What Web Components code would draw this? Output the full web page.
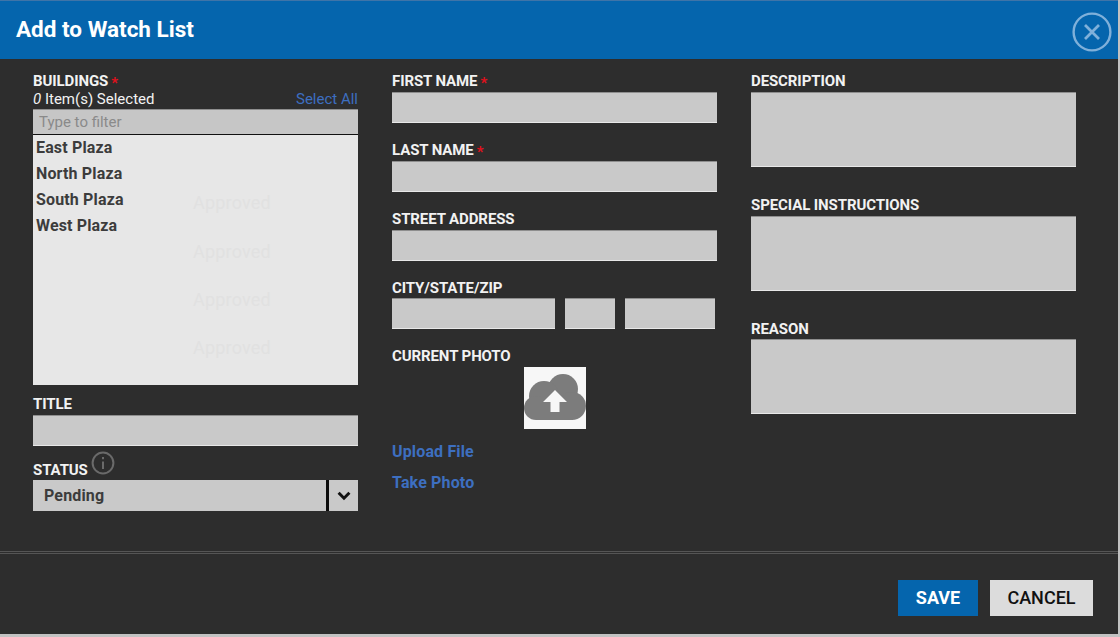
<!DOCTYPE html>
<html><head><meta charset="utf-8">
<style>
html,body{margin:0;padding:0;background:#c2c2c2;overflow:hidden}
body{font-family:Roboto,"Liberation Sans",sans-serif;height:637px}
</style></head><body>
<template id="t-field"><style>
:host{display:block;color:#f2f2f2}
.lab{display:flex;align-items:flex-start;height:var(--lh,20px);font:700 15px/18px Roboto,sans-serif;letter-spacing:-.1px}
.req{color:#e0101c;margin-left:3px;line-height:22px;display:none;letter-spacing:0}
:host([required]) .req{display:block}
</style><div class="lab"><span id="l"></span><span class="req">*</span><slot name="extra"></slot></div><slot></slot></template>

<template id="t-input"><style>
:host{display:block;box-sizing:border-box;height:var(--h,31px);width:var(--w,100%);background:#c9c9c9;border-top:1px solid #8e8e8e;border-bottom:1px solid #e8e8e8}
</style></template>

<template id="t-modal"><style>
:host{display:flex;flex-direction:column;width:1118px;height:634px;background:#2d2d2d;border-top:1px solid #3f74a8;box-sizing:border-box;position:relative}
header{flex:none;height:58px;background:#0565ad;display:flex;align-items:center;justify-content:space-between;padding:0 6px 0 16px;color:#fff;font:700 22.5px/1 Roboto,sans-serif}
header span{margin-top:-2px}
svg{display:block}
header svg{margin-top:3px}
main{flex:1;display:grid;grid-template-columns:325px 325px 325px;column-gap:34px;padding:13px 0 0 33px;min-height:0}
.col{display:flex;flex-direction:column;min-width:0}
.rule{flex:none;height:3px;border-top:1px solid #555;border-bottom:1px solid #555;box-sizing:border-box}
footer{flex:none;height:80px;display:flex;justify-content:flex-end;align-items:flex-start;gap:12px;padding:26px 25px 0 0;box-sizing:border-box}
</style>
<header><span><slot name="title"></slot></span>
<svg width="40" height="40" viewBox="0 0 40 40" fill="none" stroke="#7fb0da" stroke-width="2.4"><circle cx="20" cy="20" r="18.4"/><path d="M13 13l14 14M27 13L13 27" stroke-width="2.8"/></svg>
</header>
<main><div class="col"><slot name="a"></slot></div><div class="col"><slot name="b"></slot></div><div class="col"><slot name="c"></slot></div></main>
<div class="rule"></div>
<footer><slot name="actions"></slot></footer>
</template>

<template id="t-buildings"><style>
:host{display:block;color:#f2f2f2}
.lab{font:700 15px/18px Roboto,sans-serif;letter-spacing:-.1px;height:18px;display:flex}
.req{color:#e0101c;margin-left:3px;line-height:22px;letter-spacing:0}
.meta{display:flex;justify-content:space-between;font:400 15px/18px Roboto,sans-serif;height:19px}
.meta a{color:#3d6fc0}
.filter{box-sizing:border-box;height:26px;background:#c6c6c6;border-top:1px solid #8e8e8e;border-bottom:1px solid #111;color:#8a8a8a;font:400 15px/24px Roboto,sans-serif;padding-left:6px}
.list{box-sizing:border-box;height:250px;background:#e7e7e7;color:#3c3c3c;font:700 16px/26px Roboto,sans-serif;padding:0 3px;letter-spacing:.15px;position:relative}
.list div{height:26px}
.list span{position:absolute;left:160px;font:400 18px/20px Roboto,sans-serif;color:#e1e1e1;letter-spacing:.2px}
</style>
<div class="lab"><span>BUILDINGS</span><span class="req">*</span></div>
<div class="meta"><span><i>0</i> Item(s) Selected</span><a>Select All</a></div>
<div class="filter">Type to filter</div>
<div class="list"><div>East Plaza</div><div>North Plaza</div><div>South Plaza</div><div>West Plaza</div>
<span style="top:58px">Approved</span><span style="top:107px">Approved</span><span style="top:155px">Approved</span><span style="top:203px">Approved</span></div>
</template>

<template id="t-select"><style>
:host{display:flex;height:31px;background:#c9c9c9;color:#3c3c3c;font:700 16px/31px Roboto,sans-serif;letter-spacing:.15px}
.v{flex:1;padding-left:11px}
.b{flex:none;width:29px;border-left:3px solid #0c0c0c;display:flex;align-items:center;justify-content:center}
</style><div class="v"><slot></slot></div><div class="b"><svg width="14" height="10" viewBox="0 0 14 10" fill="none" stroke="#111" stroke-width="3"><path d="M1.600 1.800L7 7.200l5.400-5.400"/></svg></div></template>

<template id="t-upload"><style>
:host{display:block;width:62px;height:62px;background:#f7f7f7;margin:0 0 0 132px}
svg{display:block}
</style><svg width="62" height="62" viewBox="0 0 62 62"><g fill="#7c7c7c"><circle cx="39" cy="22" r="15"/><circle cx="20" cy="29" r="15"/><circle cx="12" cy="41" r="12"/><circle cx="48" cy="39" r="14"/><rect x="12" y="30" width="37" height="23"/></g><path fill="#f7f7f7" d="M31 23L43 35H35.500V45H26.500V35H19Z"/></svg></template>

<template id="t-btn"><style>
:host{display:block;box-sizing:border-box;height:36px;font:700 18px/36px Roboto,sans-serif;text-align:center;background:var(--bg);color:var(--fg);width:var(--bw)}
:host([flavor=save]){--bg:#0565ad;--fg:#fff;--bw:80px}
:host([flavor=cancel]){--bg:#dcdcdc;--fg:#111;--bw:103px;font-weight:500}
</style><slot></slot></template>

<template id="t-link"><style>
:host{display:block;color:#3d6fc0;font:700 16px/18px Roboto,sans-serif;letter-spacing:.15px}
</style><slot></slot></template>

<script>
function tpl(name,id){customElements.define(name,class extends HTMLElement{
 constructor(){super();this.attachShadow({mode:'open'}).appendChild(document.getElementById(id).content.cloneNode(true));}
 connectedCallback(){const l=this.shadowRoot.getElementById('l');if(l)l.textContent=this.getAttribute('label');}
});}
tpl('wl-modal','t-modal');tpl('wl-field','t-field');tpl('wl-input','t-input');tpl('wl-buildings','t-buildings');
tpl('wl-select','t-select');tpl('wl-upload','t-upload');tpl('wl-btn','t-btn');tpl('wl-link','t-link');
</script>

<wl-modal>
<span slot="title">Add to Watch List</span>
<div slot="a" style="display:contents">
 <wl-buildings></wl-buildings>
 <wl-field label="TITLE" style="margin-top:10px;--lh:20px"><wl-input></wl-input></wl-field>
 <wl-field label="STATUS" style="margin-top:15px;--lh:19px">
  <svg slot="extra" width="24" height="24" viewBox="0 0 24 24" fill="none" stroke="#6a6a6a" stroke-width="2" style="display:block;margin:-10px 0 0 3px"><circle cx="12" cy="12" r="10.400"/><path d="M12 10.500V18M12 6V8.200" stroke-width="2"/></svg>
  <wl-select>Pending</wl-select></wl-field>
</div>
<div slot="b" style="display:contents">
 <wl-field label="FIRST NAME" required><wl-input></wl-input></wl-field>
 <wl-field label="LAST NAME" required style="margin-top:18px"><wl-input></wl-input></wl-field>
 <wl-field label="STREET ADDRESS" style="margin-top:18px"><wl-input></wl-input></wl-field>
 <wl-field label="CITY/STATE/ZIP" style="margin-top:18px;--lh:19px">
  <div style="display:flex;gap:10px"><wl-input style="--w:163px"></wl-input><wl-input style="--w:50px"></wl-input><wl-input style="--w:90px"></wl-input></div></wl-field>
 <wl-field label="CURRENT PHOTO" style="margin-top:18px;--lh:20px"><wl-upload></wl-upload></wl-field>
 <wl-link style="margin-top:14px">Upload File</wl-link>
 <wl-link style="margin-top:13px">Take Photo</wl-link>
</div>
<div slot="c" style="display:contents">
 <wl-field label="DESCRIPTION"><wl-input style="--h:75px"></wl-input></wl-field>
 <wl-field label="SPECIAL INSTRUCTIONS" style="margin-top:29px"><wl-input style="--h:75px"></wl-input></wl-field>
 <wl-field label="REASON" style="margin-top:29px;--lh:19px"><wl-input style="--h:75px"></wl-input></wl-field>
</div>
<wl-btn slot="actions" flavor="save">SAVE</wl-btn>
<wl-btn slot="actions" flavor="cancel">CANCEL</wl-btn>
</wl-modal>
</body></html>
